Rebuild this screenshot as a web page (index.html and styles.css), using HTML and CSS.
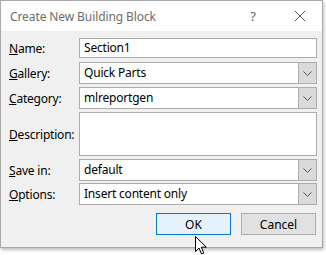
FILE: index.html
```html
<!DOCTYPE html>
<html lang="en">
<head>
    <meta charset="UTF-8">
    <title>Create New Building Block</title>
    <link rel="stylesheet" href="styles.css">
</head>
<body>

<div class="dialog">
    <div class="titlebar">
        <span class="title">Create New Building Block</span>
        <span class="help">?</span>
        <svg class="close" width="12" height="12" viewBox="0 0 12 12">
            <path d="M1 1 L11 11 M11 1 L1 11" stroke="#555" stroke-width="1" fill="none"/>
        </svg>
    </div>

    <div class="content">
        <div class="row r-name">
            <label><u>N</u>ame:</label>
            <div class="field">Section1</div>
        </div>
        <div class="row r-gallery">
            <label><u>G</u>allery:</label>
            <div class="field select">Quick Parts<span class="drop"><svg width="9" height="5" viewBox="0 0 9 5"><path d="M0.5 0.5 L4.5 4.5 L8.5 0.5" stroke="#555" fill="none"/></svg></span></div>
        </div>
        <div class="row r-category">
            <label><u>C</u>ategory:</label>
            <div class="field select">mlreportgen<span class="drop"><svg width="9" height="5" viewBox="0 0 9 5"><path d="M0.5 0.5 L4.5 4.5 L8.5 0.5" stroke="#555" fill="none"/></svg></span></div>
        </div>
        <div class="row r-desc">
            <label><u>D</u>escription:</label>
            <div class="field area"></div>
        </div>
        <div class="row r-save">
            <label><u>S</u>ave in:</label>
            <div class="field select">default<span class="drop"><svg width="9" height="5" viewBox="0 0 9 5"><path d="M0.5 0.5 L4.5 4.5 L8.5 0.5" stroke="#555" fill="none"/></svg></span></div>
        </div>
        <div class="row r-options">
            <label><u>O</u>ptions:</label>
            <div class="field select">Insert content only<span class="drop"><svg width="9" height="5" viewBox="0 0 9 5"><path d="M0.5 0.5 L4.5 4.5 L8.5 0.5" stroke="#555" fill="none"/></svg></span></div>
        </div>

        <div class="buttons">
            <button class="btn default">OK</button>
            <button class="btn">Cancel</button>
        </div>
    </div>
</div>

<!-- mouse pointer hovering over OK -->
<svg class="cursor" width="13" height="19" viewBox="0 0 13 19">
    <path d="M0.5 0.5 L0.5 15.5 L4 12 L6.5 18 L8.8 17 L6.3 11.2 L11.3 11.2 Z" fill="#fff" stroke="#000" stroke-width="1"/>
</svg>

</body>
</html>
```

FILE: styles.css
```css
html, body {
    height: 255px;
}
body {
    margin: 0;
    background: #fff;
    font-family: 'Noto Sans', 'Open Sans', sans-serif;
    font-size: 12px;
    color: #000;
    position: relative;
}
.dialog {
    width: 321px;
    height: 246px;
    border: 1px solid #a9a9a9;
    background: #f0f0f0;
    box-shadow: 1px 2px 3px rgba(0, 0, 0, 0.25);
}
.titlebar {
    height: 30px;
    background: #fff;
    display: flex;
    align-items: center;
    padding-left: 9px;
}
.title {
    flex: 1;
    color: #6d6d6d;
    font-size: 12px;
    letter-spacing: -0.1px;
}
.help {
    color: #666;
    font-size: 13px;
    margin-right: 38px;
}
.close {
    margin-right: 16px;
}
.content {
    padding: 7px 5px 0 8px;
}
.row {
    display: flex;
    align-items: center;
}
.row label {
    width: 70px;
    letter-spacing: -0.2px;
}
.field {
    flex: 1;
    height: 18px;
    border: 1px solid #acacac;
    background: #fff;
    padding-left: 4px;
    line-height: 18px;
    display: flex;
    letter-spacing: -0.2px;
}
.select {
    height: 20px;
    line-height: 20px;
}
.drop {
    margin-left: auto;
    width: 17px;
    height: 20px;
    background: #dadada;
    border-left: 1px solid #acacac;
    display: flex;
    align-items: center;
    justify-content: center;
}
.r-gallery { margin-top: 4px; }
.r-category { margin-top: 3px; }
.r-desc { margin-top: 3px; }
.area { height: 42px; }
.r-save { margin-top: 3px; }
.r-options { margin-top: 2px; }
.buttons {
    display: flex;
    justify-content: flex-end;
    gap: 10px;
    margin-top: 8px;
    margin-right: 1px;
}
.btn {
    width: 75px;
    height: 22px;
    font-family: 'Noto Sans', 'Open Sans', sans-serif;
    font-size: 12px;
    background: #e1e1e1;
    border: 1px solid #adadad;
    padding: 0;
    color: #000;
}
.btn.default {
    background: #e5f1fb;
    border-color: #0078d7;
}
.cursor {
    position: absolute;
    left: 195px;
    top: 236px;
    z-index: 10;
}
```
